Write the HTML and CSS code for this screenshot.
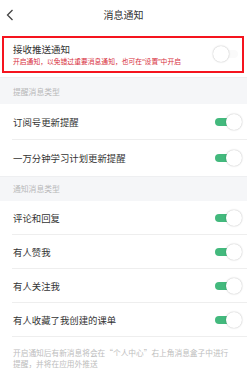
FILE: index.html
```html
<!DOCTYPE html>
<html lang="zh-CN">
  <head>
    <meta charset="UTF-8" />
    <meta name="viewport" content="width=device-width, initial-scale=1.0" />
    <title>消息通知</title>
    <link rel="stylesheet" href="styles.css">
  </head>
  <body>
    <div class="header">
      <svg class="back" width="8" height="12" viewBox="0 0 8 12">
        <path d="M6.5 1 L1.5 6 L6.5 11" fill="none" stroke="#444" stroke-width="1.3" />
      </svg>
      <h1>消息通知</h1>
    </div>

    <div class="push-box">
      <div class="push-text">
        <div class="push-title">接收推送通知</div>
        <div class="push-sub">开启通知，以免错过重要消息通知，也可在“设置”中开启</div>
      </div>
      <span class="switch"></span>
    </div>

    <div class="section-title first">提醒消息类型</div>
    <ul class="list tall">
      <li>订阅号更新提醒<span class="switch on"></span></li>
      <li>一万分钟学习计划更新提醒<span class="switch on"></span></li>
    </ul>

    <div class="section-title">通知消息类型</div>
    <ul class="list">
      <li>评论和回复<span class="switch on"></span></li>
      <li>有人赞我<span class="switch on"></span></li>
      <li>有人关注我<span class="switch on"></span></li>
      <li>有人收藏了我创建的课单<span class="switch on"></span></li>
    </ul>

    <p class="note">开启通知后有新消息将会在“个人中心”右上角消息盒子中进行提醒，并将在应用外推送</p>
  </body>
</html>
```

FILE: styles.css
```css
/* Reset styles */
*,
*::before,
*::after {
  margin: 0;
  padding: 0;
  box-sizing: border-box;
}

body {
  font-family: "Noto Sans CJK SC", "Noto Sans", sans-serif;
  color: #333;
  background-color: #fff;
  width: 247px;
}

.header {
  position: relative;
  height: 34px;
  display: flex;
  align-items: center;
  justify-content: center;
  padding-bottom: 4px;
}

.header h1 {
  font-size: 10px;
  font-weight: 400;
  line-height: 14px;
}

.back {
  position: absolute;
  left: 6px;
  top: 9px;
}

/* Highlighted push setting */
.push-box {
  display: flex;
  align-items: center;
  margin: 2px 3px 4px 2px;
  height: 37px;
  padding: 4px 1px 5px 9px;
  border: 2px solid #f5141e;
}

.push-text {
  flex: 1;
  min-width: 0;
}

.push-title {
  font-size: 9.5px;
  line-height: 14px;
}

.push-sub {
  margin-top: 1px;
  font-family: "Noto Sans", "Noto Sans CJK SC", sans-serif;
  font-size: 6.8px;
  line-height: 9px;
  color: #d8303e;
  white-space: nowrap;
}

.section-title {
  background-color: #f5f6f8;
  color: #b8b8b8;
  font-size: 7.8px;
  line-height: 10px;
  padding: 7px 13px;
  border-top: 1px solid #eeeff1;
}

.section-title.first {
  padding: 9px 13px 7px;
}

.list {
  list-style: none;
}

.list li {
  display: flex;
  align-items: center;
  justify-content: space-between;
  height: 34px;
  margin-left: 12px;
  padding: 0 5px 0 1px;
  font-size: 9.4px;
  border-bottom: 1px solid #eeeeee;
}

.list.tall li {
  height: 36px;
}

.list.tall li:last-child {
  border-bottom: none;
}

/* Toggle switch */
.switch {
  position: relative;
  width: 28px;
  height: 16px;
  flex-shrink: 0;
}

.switch::before {
  content: "";
  position: absolute;
  left: 1px;
  top: 4px;
  width: 24px;
  height: 8px;
  border-radius: 4px;
  background-color: #fafafa;
}

.switch::after {
  content: "";
  position: absolute;
  left: 0;
  top: 0;
  width: 16px;
  height: 16px;
  border-radius: 50%;
  background-color: #fff;
  box-shadow: 0 0 1.5px rgba(0, 0, 0, 0.35);
}

.switch.on::before {
  background-color: #43b97d;
}

.switch.on::after {
  left: auto;
  right: 0;
}

.note {
  padding: 11px 12px 0 13px;
  font-size: 7.7px;
  line-height: 10.5px;
  color: #bdbdbd;
}
```
